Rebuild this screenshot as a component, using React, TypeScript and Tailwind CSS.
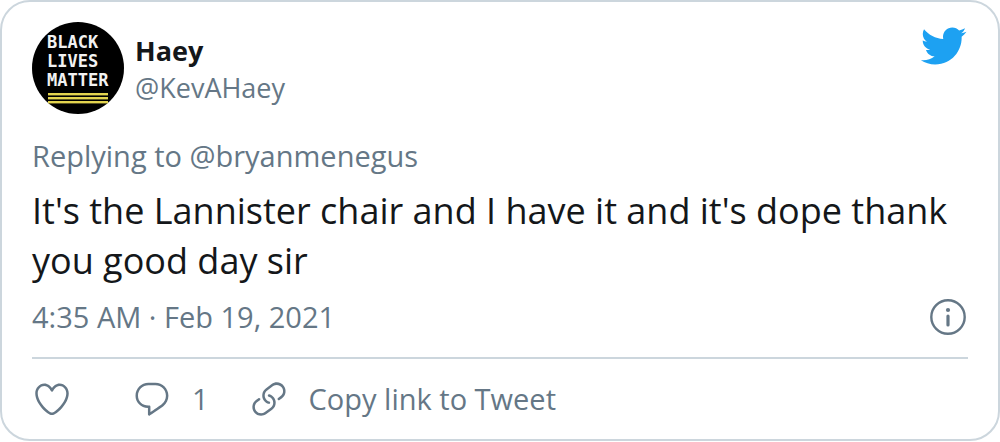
import React from 'react';

interface IconProps {
  className?: string;
}

const TwitterIcon: React.FC<IconProps> = ({ className }) => (
  <svg viewBox="0 0 24 24" fill="currentColor" className={className} aria-hidden="true">
    <path d="M23.643 4.937c-.835.37-1.732.62-2.675.733.962-.576 1.7-1.49 2.048-2.578-.9.534-1.897.922-2.958 1.13-.85-.904-2.06-1.47-3.4-1.47-2.572 0-4.658 2.086-4.658 4.66 0 .364.042.718.12 1.06-3.873-.195-7.304-2.05-9.602-4.868-.4.69-.63 1.49-.63 2.342 0 1.616.823 3.043 2.072 3.878-.764-.025-1.482-.234-2.11-.583v.06c0 2.257 1.605 4.14 3.737 4.568-.392.106-.803.162-1.227.162-.3 0-.593-.028-.877-.082.593 1.85 2.313 3.198 4.352 3.234-1.595 1.25-3.604 1.995-5.786 1.995-.376 0-.747-.022-1.112-.065 2.062 1.323 4.51 2.093 7.14 2.093 8.57 0 13.255-7.098 13.255-13.254 0-.2-.005-.402-.014-.602.91-.658 1.7-1.477 2.323-2.41z" />
  </svg>
);

const HeartIcon: React.FC<IconProps> = ({ className }) => (
  <svg viewBox="0 0 24 24" fill="currentColor" className={className} aria-hidden="true">
    <path d="M12 21.638h-.014C9.403 21.59 1.95 14.856 1.95 8.478c0-3.064 2.525-5.754 5.403-5.754 2.29 0 3.83 1.58 4.646 2.73.814-1.148 2.354-2.73 4.645-2.73 2.88 0 5.404 2.69 5.404 5.755 0 6.376-7.454 13.11-10.037 13.157H12zM7.354 4.225c-2.08 0-3.903 1.988-3.903 4.255 0 5.74 7.034 11.596 8.55 11.658 1.518-.062 8.55-5.917 8.55-11.658 0-2.267-1.823-4.255-3.903-4.255-2.528 0-3.94 2.936-3.952 2.965-.23.562-1.156.562-1.387 0-.014-.03-1.425-2.965-3.954-2.965z" />
  </svg>
);

const ReplyIcon: React.FC<IconProps> = ({ className }) => (
  <svg viewBox="0 0 24 24" fill="currentColor" className={className} aria-hidden="true">
    <path d="M14.046 2.242l-4.148-.01h-.002c-4.374 0-7.8 3.427-7.8 7.802 0 4.098 3.186 7.206 7.465 7.37v3.828c0 .108.044.286.12.403.142.225.384.347.632.347.138 0 .277-.038.402-.118.264-.168 6.473-4.14 8.088-5.506 1.902-1.61 3.04-3.97 3.043-6.312v-.017c-.006-4.367-3.43-7.787-7.8-7.788zm3.787 12.972c-1.134.96-4.862 3.405-6.772 4.643V16.67c0-.414-.335-.75-.75-.75h-.396c-3.66 0-6.318-2.476-6.318-5.886 0-3.534 2.768-6.302 6.3-6.302l4.147.01h.002c3.532 0 6.3 2.766 6.302 6.296-.003 1.91-.942 3.844-2.514 5.176z" />
  </svg>
);

const LinkIcon: React.FC<IconProps> = ({ className }) => (
  <svg viewBox="0 0 24 24" fill="currentColor" className={className} aria-hidden="true">
    <path d="M11.96 14.945c-.067 0-.136-.01-.203-.027-1.13-.318-2.097-.986-2.795-1.932-.832-1.125-1.176-2.508-.968-3.893s.942-2.605 2.068-3.438l3.53-2.608c2.322-1.716 5.61-1.224 7.33 1.1.83 1.127 1.175 2.51.967 3.895s-.943 2.605-2.07 3.438l-1.48 1.094c-.333.246-.804.175-1.05-.158-.246-.334-.176-.804.158-1.05l1.48-1.095c.803-.592 1.327-1.463 1.476-2.45.148-.988-.098-1.975-.69-2.778-1.225-1.656-3.572-2.01-5.23-.784l-3.53 2.608c-.802.593-1.326 1.464-1.475 2.45-.15.99.097 1.975.69 2.778.498.675 1.187 1.15 1.992 1.377.4.114.633.528.52.928-.092.33-.394.547-.722.547z" />
    <path d="M7.27 22.054c-1.61 0-3.197-.735-4.225-2.125-.832-1.127-1.176-2.51-.968-3.894s.943-2.605 2.07-3.438l1.478-1.094c.334-.245.805-.175 1.05.158s.177.804-.157 1.05l-1.48 1.095c-.803.593-1.326 1.464-1.475 2.45-.148.99.097 1.975.69 2.778 1.225 1.657 3.57 2.01 5.23.785l3.528-2.608c1.658-1.225 2.01-3.57.785-5.23-.498-.674-1.187-1.15-1.992-1.376-.4-.113-.633-.527-.52-.927.112-.4.528-.63.926-.522 1.13.318 2.096.986 2.794 1.932 1.717 2.324 1.224 5.612-1.1 7.33l-3.53 2.608c-.933.693-2.023 1.026-3.105 1.026z" />
  </svg>
);

const InfoIcon: React.FC<IconProps> = ({ className }) => (
  <svg viewBox="0 0 40 40" fill="none" stroke="currentColor" className={className} aria-hidden="true">
    <circle cx="20" cy="20" r="16.7" strokeWidth="2.4" />
    <circle cx="20" cy="13" r="2.1" fill="currentColor" stroke="none" />
    <path d="M20 19v9" strokeWidth="3.2" strokeLinecap="round" />
  </svg>
);

// Profile picture
const Avatar: React.FC<IconProps> = ({ className }) => (
  <svg viewBox="0 0 92 92" className={className} role="img" aria-label="Haey">
    <circle cx="46" cy="46" r="46" fill="#000" />
    <g fill="#f2f2f2" fontFamily="'DejaVu Sans Mono', monospace" fontWeight="700" fontSize="17">
      <text x="15" y="26">BLACK</text>
      <text x="15" y="45">LIVES</text>
      <text x="15" y="64">MATTER</text>
    </g>
    <g fill="#e3d44f">
      <rect x="16" y="71" width="60" height="2.4" />
      <rect x="16" y="75" width="60" height="2.4" />
      <rect x="16" y="79" width="60" height="2.4" />
    </g>
  </svg>
);

interface TweetData {
  name: string;
  handle: string;
  replyingTo: string;
  text: string;
  date: string;
  replies: number;
}

const tweet: TweetData = {
  name: 'Haey',
  handle: '@KevAHaey',
  replyingTo: '@bryanmenegus',
  text: "It's the Lannister chair and I have it and it's dope thank you good day sir",
  date: '4:35 AM · Feb 19, 2021',
  replies: 1
};

const App: React.FC = () => {
  return (
    <article className="rounded-[30px] border-2 border-[#ccd6dd] bg-white px-[30px] py-5 font-['Open_Sans','Noto_Sans',sans-serif] text-[29px] leading-9 text-[#657786]">
      {/* Author */}
      <header className="flex items-start justify-between">
        <a href="#profile" className="flex items-center gap-[11px]">
          <Avatar className="size-[92px]" />
          <span className="flex flex-col pt-0.5 text-[27px] leading-[37px]">
            <span className="font-bold text-[#14171a]">{tweet.name}</span>
            <span>{tweet.handle}</span>
          </span>
        </a>
        <a href="#twitter" aria-label="View on Twitter" className="mr-px text-[#1da1f2]">
          <TwitterIcon className="size-12" />
        </a>
      </header>

      <a href="#thread" className="mt-6 block">
        Replying to {tweet.replyingTo}
      </a>

      <p className="mt-3 text-[36px] leading-[50px] text-[#14171a]">{tweet.text}</p>

      <div className="mt-[11px] flex items-center justify-between">
        <a href="#tweet">
          <time dateTime="2021-02-19T04:35">{tweet.date}</time>
        </a>
        <a href="#info" aria-label="Twitter Ads info and privacy">
          <InfoIcon className="size-10" />
        </a>
      </div>

      {/* Actions */}
      <div className="mt-5 flex items-center border-t-2 border-[#ccd6dd] pt-5">
        <button type="button" aria-label="Like">
          <HeartIcon className="size-10" />
        </button>
        <button type="button" className="ml-[60px] flex items-center gap-5">
          <ReplyIcon className="size-10" />
          <span>{tweet.replies}</span>
        </button>
        <button type="button" className="ml-10 flex items-center gap-5">
          <LinkIcon className="size-10" />
          <span>Copy link to Tweet</span>
        </button>
      </div>
    </article>
  );
};

export default App;
